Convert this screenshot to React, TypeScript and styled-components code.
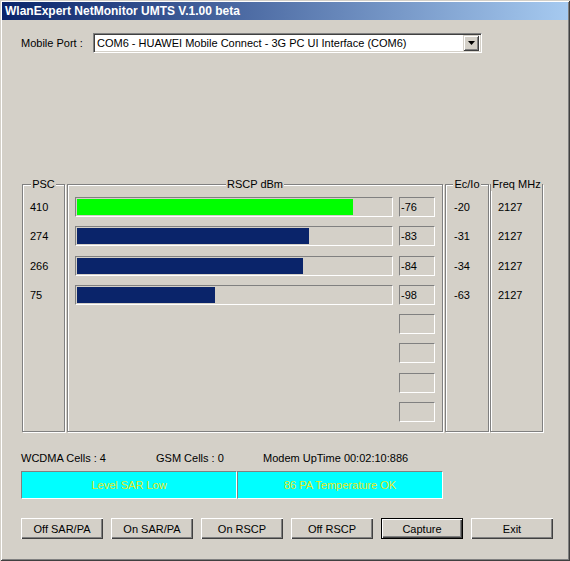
import { FunctionComponent } from "react";
import styled, { createGlobalStyle, css } from "styled-components";

const GlobalStyle = createGlobalStyle`
  html, body {
    margin: 0;
    padding: 0;
    background: #d4d0c8;
  }
  body {
    font-family: "Liberation Sans", Arial, sans-serif;
    font-size: 11px;
    color: #000;
  }
`;

const sunken = css`
  border: 1px solid;
  border-color: #808080 #ffffff #ffffff #808080;
`;

const WindowFrame = styled.div`
  width: 570px;
  height: 561px;
  box-sizing: border-box;
  padding: 2px;
  background: #d4d0c8;
  box-shadow: inset 1px 1px 0 #d4d0c8, inset -1px -1px 0 #404040,
    inset 2px 2px 0 #ffffff, inset -2px -2px 0 #808080;
  display: flex;
  flex-direction: column;
`;

const TitleBar = styled.div`
  height: 18px;
  display: flex;
  align-items: center;
  padding-left: 3px;
  background: linear-gradient(to right, #0a246a, #a6caf0);
  color: #ffffff;
  font-weight: bold;
  font-size: 12px;
  white-space: nowrap;
`;

const Body = styled.div`
  display: flex;
  flex-direction: column;
  padding: 13px 0 0 19px;
`;

const PortRow = styled.div`
  display: flex;
  align-items: center;
  height: 20px;
`;

const PortLabel = styled.label`
  width: 72px;
`;

const Combo = styled.div`
  width: 389px;
  height: 20px;
  box-sizing: border-box;
  border: 1px solid;
  border-color: #808080 #ffffff #ffffff #808080;
  box-shadow: inset 1px 1px 0 #404040, inset -1px -1px 0 #d4d0c8;
  background: #ffffff;
  display: flex;
  align-items: center;
  padding: 1px 2px 1px 3px;
`;

const ComboText = styled.span`
  flex: 1;
  white-space: nowrap;
`;

const ComboButton = styled.div`
  width: 16px;
  height: 16px;
  box-sizing: border-box;
  background: #d4d0c8;
  box-shadow: inset 1px 1px 0 #d4d0c8, inset -1px -1px 0 #404040,
    inset 2px 2px 0 #ffffff, inset -2px -2px 0 #808080;
  display: flex;
  align-items: center;
  justify-content: center;
`;

const GroupRow = styled.div`
  display: flex;
  margin-top: 125px;
  margin-left: 1px;
`;

const Group = styled.fieldset<{ $w: number; $gap?: number }>`
  width: ${(p) => p.$w}px;
  height: 254px;
  box-sizing: border-box;
  margin: 0 0 0 ${(p) => p.$gap ?? 0}px;
  padding: 6px 0 0 0;
  min-width: 0;
  border: 1px solid #808080;
  box-shadow: inset 1px 1px 0 #ffffff, 1px 1px 0 #ffffff;
`;

const Legend = styled.legend`
  margin: 0 auto;
  padding: 0 1px;
  line-height: 13px;
  background: #d4d0c8;
  position: relative;
`;

const Rows = styled.div<{ $pad: number }>`
  display: grid;
  grid-auto-rows: 20px;
  row-gap: 9.3px;
  padding-left: ${(p) => p.$pad}px;
`;

const Cell = styled.div`
  line-height: 20px;
  white-space: nowrap;
`;

const RscpRow = styled.div`
  display: grid;
  grid-template-columns: 318px 36px;
  column-gap: 6px;
`;

const Trough = styled.div`
  ${sunken};
  height: 20px;
  box-sizing: border-box;
  padding: 1px;
`;

const Fill = styled.div<{ $strong?: boolean }>`
  height: 100%;
  background: ${(p) => (p.$strong ? "#00ff00" : "#0a246a")};
`;

const ValueBox = styled.div`
  ${sunken};
  height: 20px;
  box-sizing: border-box;
  line-height: 18px;
  padding-left: 1px;
  grid-column: 2;
`;

const Status = styled.div`
  display: flex;
  margin-top: 20px;
  line-height: 13px;
`;

const StatusItem = styled.span<{ $w?: number }>`
  width: ${(p) => (p.$w ? `${p.$w}px` : "auto")};
  white-space: nowrap;
`;

const Panel = styled.div`
  display: flex;
  margin-top: 6px;
`;

const PanelCell = styled.div<{ $w: number }>`
  ${sunken};
  width: ${(p) => p.$w}px;
  height: 28px;
  box-sizing: border-box;
  background: #00ffff;
  color: #e4e81c;
  display: flex;
  align-items: center;
  justify-content: center;
`;

const ButtonRow = styled.div`
  display: flex;
  gap: 8px;
  margin-top: 19px;
`;

const Btn = styled.button<{ $default?: boolean }>`
  width: 82px;
  height: 21px;
  padding: 0;
  font: inherit;
  color: #000;
  background: #d4d0c8;
  border: none;
  box-shadow: inset 1px 1px 0 #ffffff, inset -1px -1px 0 #404040,
    inset -2px -2px 0 #808080;
  ${(p) =>
    p.$default &&
    css`
      box-shadow: inset 0 0 0 1px #000, inset 2px 2px 0 #ffffff,
        inset -2px -2px 0 #404040, inset -3px -3px 0 #808080;
    `}
`;

type CellInfo = { psc: number; rscp: number; ecio: number; freq: number };

const cells: CellInfo[] = [
  { psc: 410, rscp: -76, ecio: -20, freq: 2127 },
  { psc: 274, rscp: -83, ecio: -31, freq: 2127 },
  { psc: 266, rscp: -84, ecio: -34, freq: 2127 },
  { psc: 75, rscp: -98, ecio: -63, freq: 2127 },
];

const barPercent = (v: number) => Math.max(0, Math.min(100, ((v + 120) / 50) * 100));

const App: FunctionComponent = () => {
  return (
    <>
      <GlobalStyle />
      <WindowFrame>
        <TitleBar>WlanExpert NetMonitor UMTS V.1.00 beta</TitleBar>
        <Body>
          <PortRow>
            <PortLabel>Mobile Port :</PortLabel>
            <Combo>
              <ComboText>COM6 - HUAWEI Mobile Connect - 3G PC UI Interface (COM6)</ComboText>
              <ComboButton>
                <svg width="7" height="4" viewBox="0 0 7 4">
                  <path d="M0 0h7L3.5 4z" fill="#000" />
                </svg>
              </ComboButton>
            </Combo>
          </PortRow>

          <GroupRow>
            <Group $w={43}>
              <Legend>PSC</Legend>
              <Rows $pad={7}>
                {cells.map((c) => (
                  <Cell key={c.psc}>{c.psc}</Cell>
                ))}
              </Rows>
            </Group>
            <Group $w={376} $gap={2}>
              <Legend>RSCP dBm</Legend>
              <Rows $pad={7}>
                {cells.map((c) => (
                  <RscpRow key={c.psc}>
                    <Trough>
                      <Fill $strong={c === cells[0]} style={{ width: `${barPercent(c.rscp)}%` }} />
                    </Trough>
                    <ValueBox>{c.rscp}</ValueBox>
                  </RscpRow>
                ))}
                {[0, 1, 2, 3].map((i) => (
                  <RscpRow key={`e${i}`}>
                    <ValueBox />
                  </RscpRow>
                ))}
              </Rows>
            </Group>
            <Group $w={44} $gap={2}>
              <Legend>Ec/Io</Legend>
              <Rows $pad={8}>
                {cells.map((c) => (
                  <Cell key={c.psc}>{c.ecio}</Cell>
                ))}
              </Rows>
            </Group>
            <Group $w={53} $gap={1}>
              <Legend>Freq MHz</Legend>
              <Rows $pad={7}>
                {cells.map((c) => (
                  <Cell key={c.psc}>{c.freq}</Cell>
                ))}
              </Rows>
            </Group>
          </GroupRow>

          <Status>
            <StatusItem $w={135}>WCDMA Cells : 4</StatusItem>
            <StatusItem $w={107}>GSM Cells : 0</StatusItem>
            <StatusItem>Modem UpTime 00:02:10:886</StatusItem>
          </Status>

          <Panel>
            <PanelCell $w={216}>Level SAR Low</PanelCell>
            <PanelCell $w={206}>86 PA Temperature OK</PanelCell>
          </Panel>

          <ButtonRow>
            <Btn>Off SAR/PA</Btn>
            <Btn>On SAR/PA</Btn>
            <Btn>On RSCP</Btn>
            <Btn>Off RSCP</Btn>
            <Btn $default>Capture</Btn>
            <Btn>Exit</Btn>
          </ButtonRow>
        </Body>
      </WindowFrame>
    </>
  );
};

export default App;
